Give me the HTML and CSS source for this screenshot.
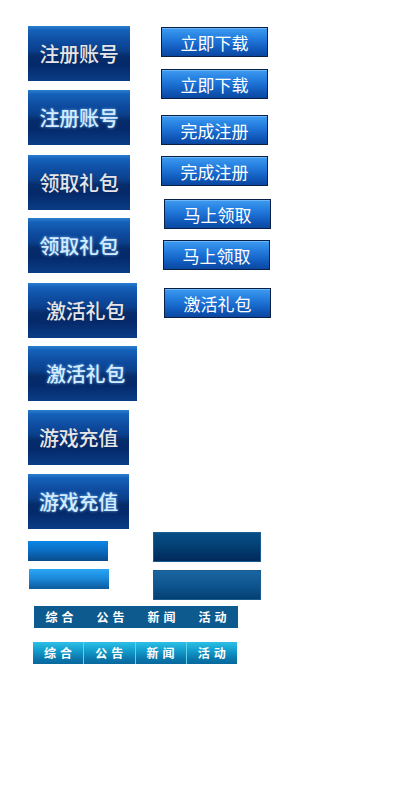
FILE: index.html
```html
<!DOCTYPE html>
<html lang="zh">
<head>
<meta charset="utf-8">
<link rel="stylesheet" href="styles.css">
</head>
<body>
<div class="top">
  <div class="col-left">
    <div class="big b1">注册账号</div>
    <div class="big b2 hover">注册账号</div>
    <div class="big b3">领取礼包</div>
    <div class="big b4 hover">领取礼包</div>
    <div class="big wide b5">激活礼包</div>
    <div class="big wide b6 hover">激活礼包</div>
    <div class="big b7 narrow">游戏充值</div>
    <div class="big b8 narrow hover">游戏充值</div>
  </div>
  <div class="col-right">
    <div class="sm s1">立即下载</div>
    <div class="sm s2">立即下载</div>
    <div class="sm s3">完成注册</div>
    <div class="sm s4">完成注册</div>
    <div class="sm s5">马上领取</div>
    <div class="sm s6">马上领取</div>
    <div class="sm s7">激活礼包</div>
  </div>
</div>
<div class="bars">
  <div class="bar-col">
    <div class="lbar l1"></div>
    <div class="lbar l2"></div>
  </div>
  <div class="bar-col dcol">
    <div class="dbar d1"></div>
    <div class="dbar d2"></div>
  </div>
</div>
<div class="tabs t1">
  <span>综合</span><span>公告</span><span>新闻</span><span>活动</span>
</div>
<div class="tabs t2">
  <span>综合</span><span>公告</span><span>新闻</span><span>活动</span>
</div>
</body>
</html>
```
FILE: styles.css
```css
html, body {
  margin: 0;
  padding: 0;
  background: #ffffff;
  width: 400px;
  height: 800px;
  font-family: "Noto Sans CJK SC", "Noto Sans", sans-serif;
}
.top {
  display: flex;
  padding-left: 28px;
  padding-top: 26px;
}
.col-left {
  display: flex;
  flex-direction: column;
  width: 133px;
}
.big {
  width: 102px;
  height: 55px;
  display: flex;
  align-items: center;
  justify-content: center;
  color: #e6e6ea;
  font-size: 20px;
  font-weight: 500;
  letter-spacing: -0.3px;
  background: linear-gradient(to bottom,
    #2a7fd2 0%, #1560b8 8%, #0d4a9e 30%, #0b3f8a 45%,
    #062c6a 55%, #05296a 70%, #0a3d86 100%);
  text-shadow: 0 0 1px rgba(0,0,0,0.4);
}
.big.hover {
  color: #d4ecff;
  text-shadow: 0 0 3px rgba(120,190,255,0.9);
}
.big.wide { width: 109px; padding-left: 6px; box-sizing: border-box; }
.big.narrow { width: 101px; }
.b2 { margin-top: 9px; }
.b3 { margin-top: 10px; }
.b4 { margin-top: 8px; }
.b5 { margin-top: 10px; }
.b6 { margin-top: 8px; }
.b7 { margin-top: 9px; }
.b8 { margin-top: 9px; }

.col-right {
  display: flex;
  flex-direction: column;
  padding-top: 1px;
}
.sm {
  width: 107px;
  height: 30px;
  box-sizing: border-box;
  border: 1px solid #0a1f45;
  display: flex;
  align-items: center;
  justify-content: center;
  color: #ffffff;
  font-size: 17px;
  background: linear-gradient(to bottom,
    #3f9bef 0%, #2a86e4 25%, #1a6cd0 55%, #0f56b6 80%, #0b47a0 100%);
  box-shadow: inset 0 1px 0 rgba(150,210,255,0.5);
}
.s2 { margin-top: 12px; }
.s3 { margin-top: 16px; }
.s4 { margin-top: 11px; }
.s5 { margin-top: 13px; margin-left: 3px; }
.s6 { margin-top: 11px; margin-left: 2px; }
.s7 { margin-top: 18px; margin-left: 3px; }

.bars {
  display: flex;
  padding-left: 28px;
  margin-top: 3px;
}
.bar-col {
  display: flex;
  flex-direction: column;
}
.lbar {
  width: 80px;
  height: 20px;
}
.l1 {
  margin-top: 9px;
  background: linear-gradient(to bottom, #0a86e6 0%, #0b6cc0 50%, #0a4c8c 100%);
}
.l2 {
  margin-top: 8px;
  margin-left: 1px;
  background: linear-gradient(to bottom, #2aa6f6 0%, #1a86d6 50%, #0c5a9c 100%);
}
.dcol { margin-left: 44px; }
.dbar {
  width: 108px;
  height: 30px;
  box-sizing: border-box;
  border: 1px solid #1a5c8e;
}
.d1 {
  background: linear-gradient(to bottom, #054f88 0%, #033f72 50%, #01285a 100%);
}
.d2 {
  margin-top: 8px;
  background: linear-gradient(to bottom, #1a65a0 0%, #0e5690 50%, #043f72 100%);
}

.tabs {
  display: flex;
  width: 204px;
  height: 22px;
}
.tabs span {
  flex: 1;
  display: flex;
  align-items: center;
  justify-content: center;
  color: #ffffff;
  font-size: 12px;
  font-weight: bold;
  letter-spacing: 4px;
  padding-left: 4px;
  padding-bottom: 1px;
}
.t1 {
  margin-left: 34px;
  margin-top: 6px;
  background: #0d5a8e;
}
.t2 {
  margin-left: 33px;
  margin-top: 14px;
  background: linear-gradient(to bottom, #2cc0e6 0%, #139ccc 40%, #0b78ad 75%, #08689c 100%);
}
.t2 span + span {
  border-left: 1px solid #5fd0ee;
}
```
